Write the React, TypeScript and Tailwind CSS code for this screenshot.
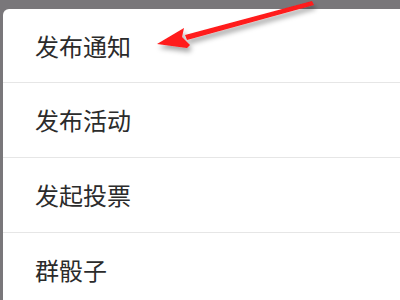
const items = ['发布通知', '发布活动', '发起投票', '群骰子'];

export default function App() {
  return (
    <div className="relative w-[400px] h-[300px] overflow-hidden bg-[#79777a] pt-[9px] pl-[3px]">
      <div
        className="w-[420px] h-[320px] bg-white rounded-tl-[6px]"
        style={{ fontFamily: '"Noto Sans CJK SC", "Noto Sans", sans-serif' }}
      >
        {items.map((label, i) => (
          <div
            key={label}
            className={`flex items-center pl-[32px] text-[24px] text-[#2b2b2b] ${i === 0 ? 'h-[74px]' : 'h-[75px]'} border-b border-[#e6e6e6]`}
          >
            {label}
          </div>
        ))}
      </div>

      {/* red annotation arrow */}
      <svg className="absolute left-0 top-0 pointer-events-none" width="400" height="300" viewBox="0 0 400 300">
        <defs>
          <filter id="sh" x="-20%" y="-50%" width="140%" height="200%">
            <feDropShadow dx="2" dy="4" stdDeviation="2.5" floodColor="#000" floodOpacity="0.35" />
          </filter>
        </defs>
        <g filter="url(#sh)">
          <path d="M312 1 L314 5 L187 40 L185 35 Z" fill="#ff1a1a" />
          <path d="M157 44 L184 28 L182 37 L190 45 L187 48 Z" fill="#ff1a1a" />
        </g>
      </svg>
    </div>
  );
}
